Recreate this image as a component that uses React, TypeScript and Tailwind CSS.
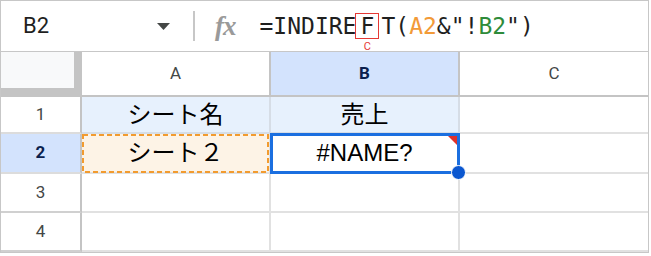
import React from "react";

const ui = { fontFamily: "Roboto, 'Liberation Sans', sans-serif" };
const cellFont = {
  fontFamily: "'Liberation Sans', 'Noto Sans CJK JP', sans-serif",
};
const mono = { fontFamily: "'DejaVu Sans Mono', 'Liberation Mono', monospace" };

const colHeaders = [
  { label: "A", w: "w-[189px]", active: false },
  { label: "B", w: "w-[189px]", active: true },
  { label: "C", w: "w-[188px]", active: false },
];

const FormulaBar: React.FC = () => (
  <div className="flex items-center h-[51px] border-b border-[#c7c7c7]">
    {/* Name box */}
    <div className="flex items-center w-[192px] pl-[22px]" style={ui}>
      <span className="text-[22px] text-[#1f1f1f] leading-none">B2</span>
      <svg className="ml-[108px]" width="13" height="7" viewBox="0 0 13 7">
        <polygon points="0,0 13,0 6.5,7" fill="#444746" />
      </svg>
    </div>
    <div className="w-[2px] h-[30px] bg-[#c7c7c7]" />
    {/* fx */}
    <span
      className="ml-[20px] text-[27px] italic font-bold text-[#9a9a9a] leading-none tracking-[-1px]"
      style={{ fontFamily: "'Liberation Serif', serif" }}
    >
      fx
    </span>
    {/* Formula */}
    <div
      className="ml-[24px] flex items-center text-[23px] text-[#1f1f1f] leading-none"
      style={mono}
    >
      <span>=INDIRE</span>
      <span className="relative inline-flex items-center justify-center w-[24px] h-[26px] border border-[#e53935] ml-[-1px] mr-[2px]">
        F
        <span
          className="absolute left-1/2 -translate-x-1/2 top-full mt-[3px] text-[11px] text-[#e53935] leading-none"
          style={ui}
        >
          C
        </span>
      </span>
      <span>T(</span>
      <span className="text-[#f29a38]">A2</span>
      <span>&amp;"!</span>
      <span className="text-[#2e8b3a]">B2</span>
      <span>")</span>
    </div>
  </div>
);

const App: React.FC = () => {
  return (
    <div className="w-[651px] h-[256px] bg-white">
      <div className="w-[649px] h-[253px] border border-[#c7c7c7] flex flex-col">
        <FormulaBar />

        {/* Column headers */}
        <div className="flex h-[45px]" style={ui}>
          <div className="w-[81px] bg-[#f8f9fa] border-r-[8px] border-b-[9px] border-[#c4c4c4]" />
          {colHeaders.map((c) => (
            <div
              key={c.label}
              className={`${c.w} flex items-center justify-center text-[17px] border-b-2 ${
                c.label !== "C" ? "border-r-2" : ""
              } border-[#c4c4c4] ${
                c.active
                  ? "bg-[#d3e3fd] text-[#0b1f4e] font-bold"
                  : "bg-white text-[#444746]"
              }`}
            >
              {c.label}
            </div>
          ))}
        </div>

        {/* Row 1 */}
        <div className="flex h-[37px]">
          <div
            className="w-[81px] flex items-center justify-center text-[17px] text-[#444746] border-r-2 border-b-2 border-r-[#c4c4c4] border-b-[#dcdcdc]"
            style={ui}
          >
            1
          </div>
          <div
            className="w-[189px] flex items-center justify-center bg-[#e7f1fd] text-[24px] text-black border-r-2 border-b-2 border-[#d6dde6]"
            style={cellFont}
          >
            シート名
          </div>
          <div
            className="w-[189px] flex items-center justify-center bg-[#e7f1fd] text-[24px] text-black border-r-2 border-b-2 border-[#d6dde6]"
            style={cellFont}
          >
            売上
          </div>
          <div className="w-[188px] border-b-2 border-[#e1e1e1]" />
        </div>

        {/* Row 2 */}
        <div className="flex h-[40px]">
          <div
            className="w-[81px] flex items-center justify-center text-[17px] font-bold text-[#0b1f4e] bg-[#d3e3fd] border-r-2 border-b-2 border-r-[#c4c4c4] border-b-[#dcdcdc]"
            style={ui}
          >
            2
          </div>
          <div
            className="relative w-[189px] flex items-center justify-center bg-[#fdf3e6] text-[24px] text-black border-r-2 border-b-2 border-[#e1e1e1]"
            style={cellFont}
          >
            シート２
            <svg className="absolute left-0 top-0" width="187" height="40">
              <rect
                x="1"
                y="1"
                width="185"
                height="37"
                fill="none"
                stroke="#f29b2f"
                strokeWidth="2"
                strokeDasharray="5 3"
              />
            </svg>
          </div>
          <div
            className="relative w-[189px] flex items-center justify-center bg-white text-[24px] text-black border-r-2 border-b-2 border-[#e1e1e1]"
            style={cellFont}
          >
            #NAME?
            <div className="absolute -left-[1px] -top-[1px] -right-[2px] -bottom-[2px] border-[3px] border-[#1b6fe0]" />
            <svg className="absolute right-[1px] top-[2px]" width="9" height="9">
              <polygon points="0,0 9,0 9,9" fill="#e0312a" />
            </svg>
            <div className="absolute -right-[8px] -bottom-[8px] w-[15px] h-[15px] rounded-full bg-[#0b57d0] border border-white" />
          </div>
          <div className="w-[188px] border-b-2 border-[#e1e1e1]" />
        </div>

        {/* Rows 3-4 */}
        {["3", "4"].map((r) => (
          <div key={r} className="flex h-[39px]">
            <div
              className="w-[81px] flex items-center justify-center text-[17px] text-[#444746] border-r-2 border-b-2 border-r-[#c4c4c4] border-b-[#d0d0d0]"
              style={ui}
            >
              {r}
            </div>
            <div className="w-[189px] border-r-2 border-b-2 border-[#e1e1e1]" />
            <div className="w-[189px] border-r-2 border-b-2 border-[#e1e1e1]" />
            <div className="w-[188px] border-b-2 border-[#e1e1e1]" />
          </div>
        ))}
      </div>
    </div>
  );
};

export default App;
